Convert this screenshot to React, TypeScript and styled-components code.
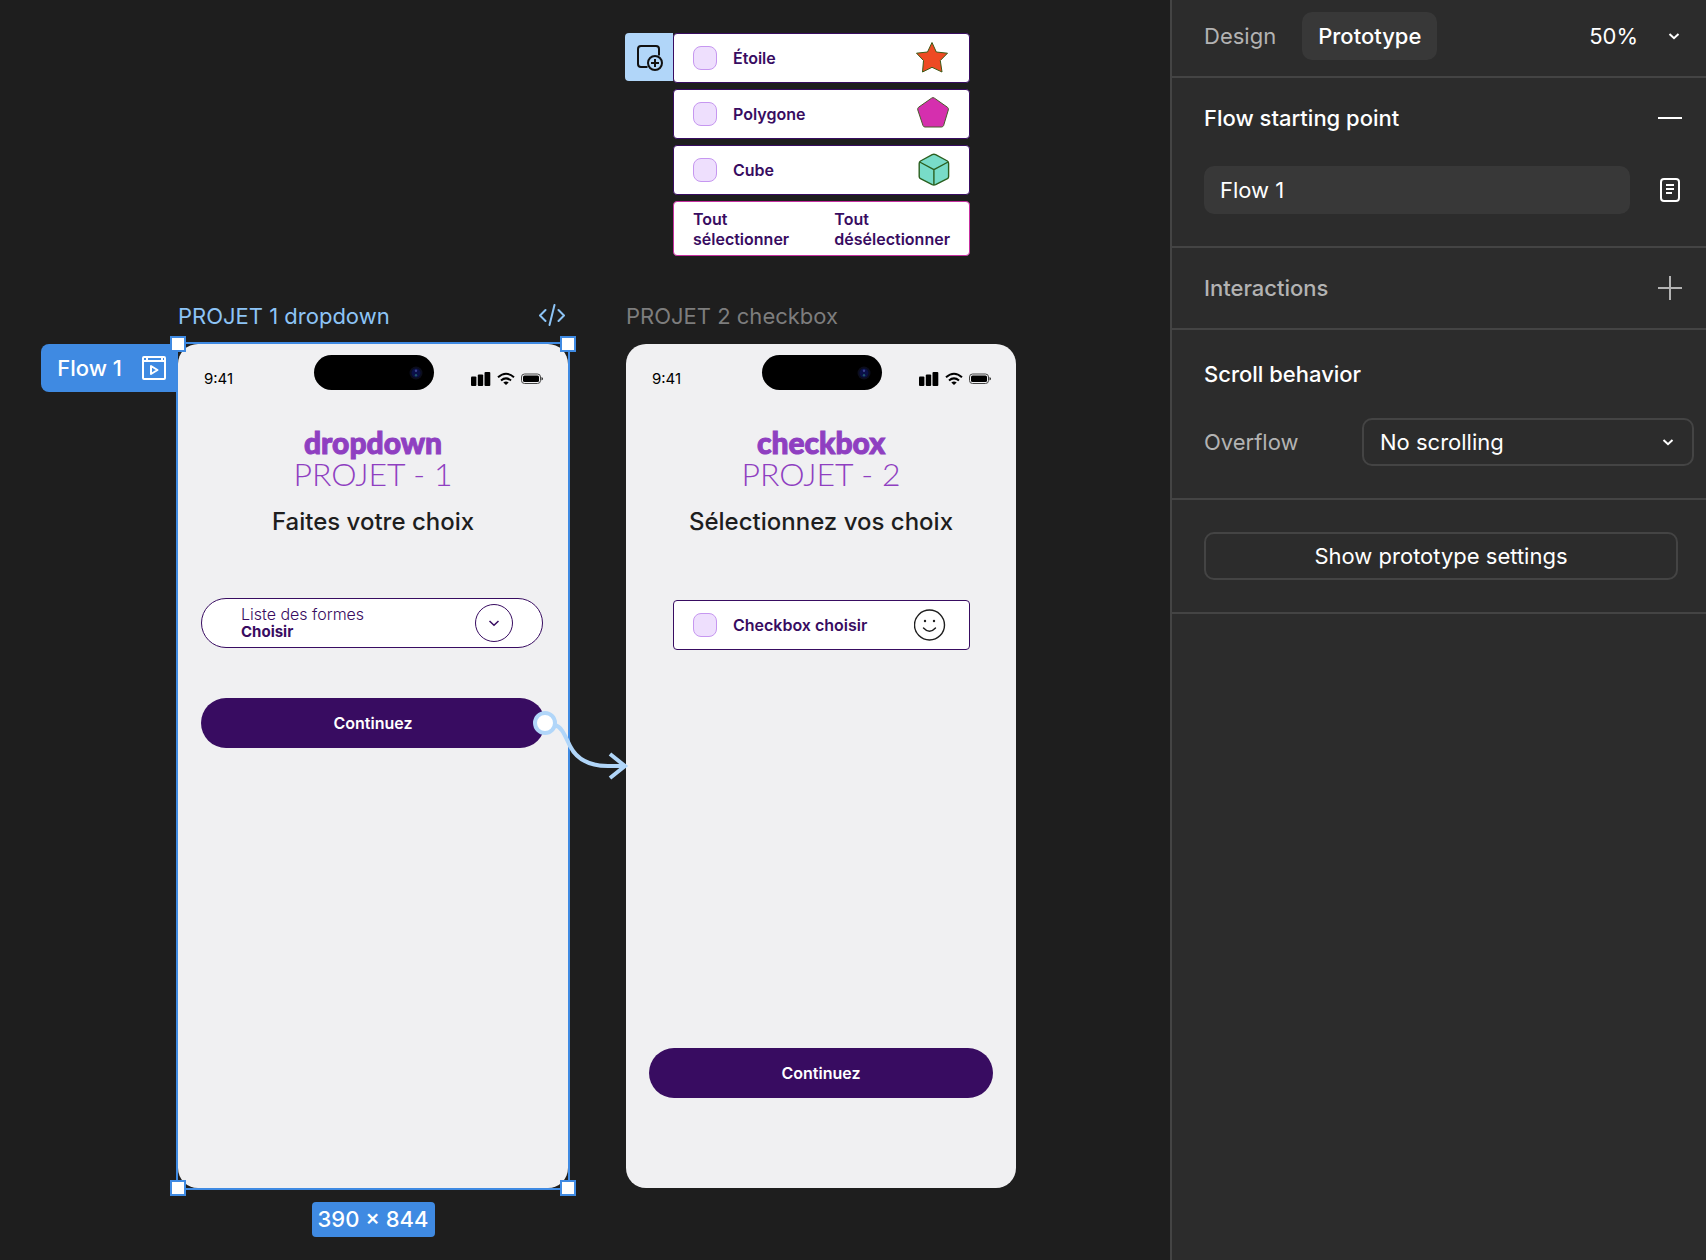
import React from "react";
import styled, { createGlobalStyle } from "styled-components";

const color = {
  canvas: "#1e1e1e",
  panel: "#2c2c2c",
  line: "#444444",
  field: "#383838",
  muted: "#b3b3b3",
  blue: "#3f8ae2",
  paleBlue: "#b1d6f9",
  plum: "#380c61",
  violet: "#8f3fc1",
  paper: "#f0f0f2",
};

const GlobalStyle = createGlobalStyle`
  *, *::before, *::after { box-sizing: border-box; }
  body {
    margin: 0;
    background: ${color.canvas};
    font-family: Inter, "Liberation Sans", sans-serif;
    -webkit-font-smoothing: antialiased;
  }
  button, input, select { font: inherit; color: inherit; margin: 0; }
  h1, h2, p { margin: 0; }
  svg { display: block; flex: none; }
`;

const Layout = styled.div`
  display: flex;
  min-height: 100vh;
`;

/* ---------- Canvas ---------- */

const Canvas = styled.main`
  position: relative;
  flex: 1;
  min-width: 0;
  overflow: hidden;
  background: ${color.canvas};
`;

const Node = styled.section<{ $x: number; $y: number }>`
  position: absolute;
  left: ${(p) => p.$x}px;
  top: ${(p) => p.$y}px;
`;

const ComponentSet = styled.div`
  display: flex;
  align-items: flex-start;
`;

const AddVariant = styled.button`
  display: grid;
  place-items: center;
  width: 48px;
  height: 48px;
  padding: 0;
  border: 0;
  border-radius: 4px 0 0 4px;
  background: ${color.paleBlue};
  color: #111;
`;

const Variants = styled.div`
  display: grid;
  gap: 6px;
  width: 297px;
`;

const CheckRow = styled.label`
  display: flex;
  align-items: center;
  gap: 16px;
  height: 50px;
  padding: 0 19px;
  border: 1px solid ${color.plum};
  border-radius: 4px;
  background: #fff;
  color: ${color.plum};
  font-size: 16px;
  font-weight: 600;
`;

const CheckText = styled.span`
  flex: 1;
`;

const Check = styled.input`
  appearance: none;
  width: 24px;
  height: 24px;
  border: 1px solid #c697f0;
  border-radius: 8px;
  background: #eedffd;

  &:checked {
    background: #c697f0;
  }
`;

const BulkRow = styled.div`
  display: flex;
  justify-content: space-between;
  padding: 7px 19px 6px;
  border: 1px solid #c52f9f;
  border-radius: 4px;
  background: #fff;
`;

const BulkButton = styled.button`
  padding: 0;
  border: 0;
  background: none;
  color: ${color.plum};
  font-size: 16px;
  font-weight: 600;
  line-height: 20px;
  text-align: left;
`;

const FrameLabel = styled.header<{ $active?: boolean }>`
  display: flex;
  align-items: center;
  justify-content: space-between;
  height: 32px;
  margin-bottom: 12px;
  padding-right: 2px;
  color: ${(p) => (p.$active ? "#8dc4f6" : "#7d7d7d")};
  font-size: 22px;
  line-height: 32px;
`;

const FrameBody = styled.div`
  position: relative;
`;

const Phone = styled.article`
  display: flex;
  flex-direction: column;
  width: 390px;
  height: 844px;
  padding: 0 23px 90px;
  border-radius: 20px;
  background: ${color.paper};
`;

const StatusBar = styled.div`
  display: grid;
  grid-template-columns: 1fr auto 1fr;
  align-items: center;
  height: 47px;
  margin: 11px 2px 0 3px;
  color: #000;
  font-size: 15px;
`;

const Island = styled.div`
  display: flex;
  align-items: center;
  justify-content: flex-end;
  align-self: start;
  width: 120px;
  height: 35px;
  padding-right: 11px;
  border-radius: 18px;
  background: #000;
`;

const StatusIcons = styled.div`
  display: flex;
  align-items: center;
  justify-content: flex-end;
  gap: 6px;
`;

const PhoneTitle = styled.h1`
  display: grid;
  margin: 24px 0 16px;
  color: ${color.violet};
  font-family: Lato, Inter, sans-serif;
  font-size: 32px;
  font-weight: 300;
  line-height: 32px;
  text-align: center;
`;

const TitleName = styled.strong`
  font-size: 30px;
  font-weight: 900;
  -webkit-text-stroke: 1px currentColor;
`;

const PhoneSubtitle = styled.p`
  color: #1e1e1e;
  font-size: 24px;
  font-weight: 500;
  line-height: 32px;
  text-align: center;
`;

const Picker = styled.label`
  display: flex;
  align-items: center;
  justify-content: space-between;
  width: 342px;
  height: 50px;
  margin: 60px 0 50px;
  padding: 0 29px 0 39px;
  border: 1px solid ${color.plum};
  border-radius: 25px;
  background: #fff;
  color: ${color.plum};
`;

const PickerText = styled.span`
  display: grid;
  flex: 1;
  font-size: 16px;
  font-weight: 300;
  line-height: 18px;
`;

const PickerSelect = styled.select`
  appearance: none;
  height: 18px;
  padding: 0;
  border: 0;
  background: none;
  font-size: 15px;
  font-weight: 700;
  line-height: 18px;
`;

const PickerArrow = styled.span`
  display: grid;
  place-items: center;
  width: 38px;
  height: 38px;
  border: 1px solid ${color.plum};
  border-radius: 50%;
`;

const CheckSlot = styled.div`
  width: 297px;
  margin: 62px auto auto 24px;
`;

const Continue = styled.button`
  height: 50px;
  border: 0;
  border-radius: 25px;
  background: ${color.plum};
  color: #fff;
  font-size: 16px;
  font-weight: 600;
`;

/* ---------- Selection overlay ---------- */

const Outline = styled.div`
  position: absolute;
  inset: -2px;
  border: 2px solid ${color.blue};
  pointer-events: none;
`;

const Handle = styled.span<{ $right?: boolean; $bottom?: boolean }>`
  position: absolute;
  ${(p) => (p.$right ? "right" : "left")}: -8px;
  ${(p) => (p.$bottom ? "bottom" : "top")}: -8px;
  width: 16px;
  height: 16px;
  border: 2px solid ${color.blue};
  background: #fff;
`;

const FlowTag = styled.button`
  position: absolute;
  top: 0;
  right: 100%;
  display: flex;
  align-items: center;
  gap: 20px;
  height: 48px;
  padding: 0 12px 0 16px;
  border: 0;
  border-radius: 8px 0 0 8px;
  background: ${color.blue};
  color: #fff;
  font-size: 22px;
  font-weight: 500;
  white-space: nowrap;
`;

const SizeRow = styled.div`
  position: absolute;
  top: 100%;
  left: 0;
  right: 0;
  display: flex;
  justify-content: center;
  padding-top: 14px;
`;

const SizeBadge = styled.span`
  padding: 0 6px;
  border-radius: 4px;
  background: ${color.blue};
  color: #fff;
  font-size: 22px;
  font-weight: 500;
  line-height: 35px;
`;

const Connector = styled.svg`
  position: absolute;
  left: 354px;
  top: 366px;
`;

/* ---------- Side panel ---------- */

const Panel = styled.aside`
  flex: none;
  width: 536px;
  border-left: 2px solid ${color.line};
  background: ${color.panel};
  color: #fff;
  font-size: 22px;
  line-height: 32px;
`;

const PanelHeader = styled.header`
  display: flex;
  align-items: center;
  justify-content: space-between;
  padding: 12px 16px 16px;
  border-bottom: 2px solid ${color.line};
`;

const Tabs = styled.nav`
  display: flex;
  gap: 10px;
`;

const Tab = styled.button<{ $active?: boolean }>`
  height: 48px;
  padding: 0 16px;
  border: 0;
  border-radius: 10px;
  background: ${(p) => (p.$active ? color.field : "none")};
  color: ${(p) => (p.$active ? "#fff" : color.muted)};
  font-weight: ${(p) => (p.$active ? 500 : 400)};
`;

const Zoom = styled.button`
  display: flex;
  align-items: center;
  gap: 30px;
  padding: 0 10px;
  border: 0;
  background: none;
`;

const Section = styled.section<{ $gap?: number; $top?: number; $bottom?: number }>`
  display: grid;
  gap: ${(p) => p.$gap ?? 0}px;
  padding: ${(p) => p.$top ?? 16}px 12px ${(p) => p.$bottom ?? 16}px 32px;
  border-bottom: 2px solid ${color.line};
`;

const Line = styled.div`
  display: flex;
  align-items: center;
  justify-content: space-between;
  height: 48px;
`;

const SectionTitle = styled.h2<{ $muted?: boolean }>`
  color: ${(p) => (p.$muted ? color.muted : "#fff")};
  font-size: 22px;
  font-weight: 500;
`;

const IconButton = styled.button<{ $muted?: boolean }>`
  display: grid;
  place-items: center;
  width: 48px;
  height: 48px;
  padding: 0;
  border: 0;
  background: none;
  color: ${(p) => (p.$muted ? color.muted : "#fff")};
`;

const TextField = styled.input`
  flex: 1;
  min-width: 0;
  height: 48px;
  margin-right: 16px;
  padding: 0 16px;
  border: 0;
  border-radius: 10px;
  background: ${color.field};
`;

const FieldLabel = styled.label`
  color: ${color.muted};
`;

const SelectBox = styled.div`
  position: relative;
  width: 332px;
`;

const Select = styled.select`
  appearance: none;
  width: 100%;
  height: 48px;
  padding: 0 16px;
  border: 2px solid ${color.line};
  border-radius: 10px;
  background: ${color.panel};
`;

const SelectArrow = styled.span`
  position: absolute;
  top: 50%;
  right: 20px;
  transform: translateY(-50%);
  pointer-events: none;
`;

const SettingsButton = styled.button`
  height: 48px;
  margin-right: 16px;
  border: 2px solid ${color.line};
  border-radius: 10px;
  background: none;
`;

/* ---------- Drawings ---------- */

const Chevron = ({ stroke = 2 }: { stroke?: number }) => (
  <svg width="12" height="12" viewBox="0 0 12 12" fill="none" stroke="currentColor" strokeWidth={stroke}>
    <path d="M1.5 4 6 8.2 10.5 4" />
  </svg>
);

const AddIcon = () => (
  <svg width="28" height="28" viewBox="0 0 28 28" fill="none" stroke="currentColor" strokeWidth="2">
    <path d="M12.500 24H6a3 3 0 0 1-3-3V6a3 3 0 0 1 3-3h15a3 3 0 0 1 3 3v6.500" />
    <circle cx="20" cy="20" r="7" />
    <path d="M20 16v8M16 20h8" />
  </svg>
);

const StarIcon = () => (
  <svg width="36" height="36" viewBox="0 0 36 36" fill="#ee4a23" stroke="#3c5a16" strokeLinejoin="round">
    <path d="M18 2.500 22.300 12 33.500 13.200 26.300 20.500 28 32 18 27.300 8.500 32 9.500 20.500 2.500 13.200 13.500 12Z" />
  </svg>
);

const PentagonIcon = () => (
  <svg width="36" height="36" viewBox="0 0 36 36" fill="#d52fae" stroke="#4a5a2a" strokeLinejoin="round">
    <path d="M17.500 2.200Q19 1 20.500 2.200L33.500 11.300Q34.800 12.400 34.300 14L29.600 29.600Q29 31 27.500 31H11Q9.500 31 9 29.600L3.800 14Q3.300 12.400 4.500 11.300Z" />
  </svg>
);

const CubeIcon = () => (
  <svg width="36" height="36" viewBox="0 0 36 36" fill="#78dcc8" stroke="#2b5f1f" strokeWidth="1.400" strokeLinejoin="round">
    <path d="M18.200 2.700Q19.900 1.900 21.600 2.700L33.400 9Q34.600 9.800 34.600 11.400V24.400Q34.600 26 33.400 26.700L21.600 32.700Q19.900 33.500 18.200 32.700L6.500 26.700Q5.200 26 5.200 24.400V11.400Q5.200 9.800 6.500 9Z" />
    <path d="M5.700 10 19.900 17.700 34.100 10M19.900 17.700V33" fill="none" />
  </svg>
);

const SmileyIcon = () => (
  <svg width="36" height="36" viewBox="0 0 36 36" fill="none" stroke="#1e1e1e" strokeWidth="1.400" strokeLinecap="round">
    <circle cx="15.500" cy="18" r="15" />
    <path d="M9.500 21Q15.500 27.500 21.500 21" />
    <g fill="#1e1e1e" stroke="none">
      <circle cx="11" cy="14" r="1.200" />
      <circle cx="20" cy="14" r="1.200" />
    </g>
  </svg>
);

const CodeIcon = () => (
  <svg width="28" height="24" viewBox="0 0 28 24" fill="none" stroke="currentColor" strokeWidth="2" strokeLinecap="round" strokeLinejoin="round">
    <path d="M7.500 6 2 11.500 7.500 17M20.500 6 26 11.500 20.500 17M16.500 1 11.500 21" />
  </svg>
);

const PlayFrameIcon = () => (
  <svg width="24" height="24" viewBox="0 0 24 24" fill="none" stroke="currentColor" strokeWidth="2">
    <rect x="1" y="1" width="22" height="22" rx="1" />
    <path d="M1 5H23M5 1V5M20 1V5" />
    <path d="M9 10V18L15.500 14Z" strokeLinejoin="round" />
  </svg>
);

const NoteIcon = () => (
  <svg width="20" height="24" viewBox="0 0 20 24" fill="none" stroke="currentColor" strokeWidth="2">
    <rect x="1" y="1" width="18" height="22" rx="3" />
    <path d="M6 7H14M6 11H14M6 15H12" />
  </svg>
);

const LineIcon = ({ d }: { d: string }) => (
  <svg width="24" height="24" viewBox="0 0 24 24" fill="none" stroke="currentColor" strokeWidth="2">
    <path d={d} />
  </svg>
);

const CameraDot = () => (
  <svg width="14" height="14" viewBox="0 0 14 14">
    <circle cx="7" cy="7" r="6.500" fill="#0b0d1c" />
    <circle cx="7" cy="7" r="4.500" fill="#0a1048" />
    <circle cx="7" cy="4.800" r="1.200" fill="#3b4290" />
    <circle cx="7" cy="9.200" r="1.200" fill="#1f5468" />
  </svg>
);

const Signal = () => (
  <svg width="20" height="14" viewBox="0 0 20 14" fill="#000">
    <rect x="0" y="4.500" width="5.400" height="9.500" rx="1" />
    <rect x="6.800" y="2.500" width="5.400" height="11.500" rx="1" />
    <rect x="13.500" y="0" width="5.800" height="14" rx="1" />
  </svg>
);

const Wifi = () => (
  <svg width="18" height="14" viewBox="0 0 18 14" fill="none" stroke="#000" strokeWidth="2">
    <path d="M1 5.300Q9-1.800 17 5.300M4 8.600Q9 4.200 14 8.600" />
    <path d="M9 13 6.300 10.500Q9 8.400 11.700 10.500Z" fill="#000" stroke="none" />
  </svg>
);

const Battery = () => (
  <svg width="22" height="12" viewBox="0 0 22 12">
    <rect x="0.500" y="1" width="19" height="9.500" rx="3" fill="none" stroke="#444" />
    <rect x="2" y="2.500" width="16" height="6.500" rx="1.500" fill="#000" />
    <path d="M20.500 4v3.500Q22 7 22 5.700 22 4.500 20.500 4Z" fill="#222" />
  </svg>
);

/* ---------- Composed parts ---------- */

function CheckOption({ label, icon }: { label: string; icon: React.ReactNode }) {
  return (
    <CheckRow>
      <Check type="checkbox" />
      <CheckText>{label}</CheckText>
      {icon}
    </CheckRow>
  );
}

function PhoneHead({ name, project, subtitle }: { name: string; project: string; subtitle: string }) {
  return (
    <>
      <StatusBar>
        <span>9:41</span>
        <Island>
          <CameraDot />
        </Island>
        <StatusIcons>
          <Signal />
          <Wifi />
          <Battery />
        </StatusIcons>
      </StatusBar>
      <PhoneTitle>
        <TitleName>{name}</TitleName>
        <span>{project}</span>
      </PhoneTitle>
      <PhoneSubtitle>{subtitle}</PhoneSubtitle>
    </>
  );
}

export default function App() {
  return (
    <Layout>
      <GlobalStyle />
      <Canvas>
        <Node $x={625} $y={33}>
          <ComponentSet>
            <AddVariant aria-label="Add variant">
              <AddIcon />
            </AddVariant>
            <Variants>
              <CheckOption label="Étoile" icon={<StarIcon />} />
              <CheckOption label="Polygone" icon={<PentagonIcon />} />
              <CheckOption label="Cube" icon={<CubeIcon />} />
              <BulkRow>
                <BulkButton>
                  Tout
                  <br />
                  sélectionner
                </BulkButton>
                <BulkButton>
                  Tout
                  <br />
                  désélectionner
                </BulkButton>
              </BulkRow>
            </Variants>
          </ComponentSet>
        </Node>

        <Node $x={626} $y={300}>
          <FrameLabel>PROJET 2 checkbox</FrameLabel>
          <FrameBody>
            <Phone>
              <PhoneHead name="checkbox" project="PROJET - 2" subtitle="Sélectionnez vos choix" />
              <CheckSlot>
                <CheckOption label="Checkbox choisir" icon={<SmileyIcon />} />
              </CheckSlot>
              <Continue>Continuez</Continue>
            </Phone>
          </FrameBody>
        </Node>

        <Node $x={178} $y={300}>
          <FrameLabel $active>
            PROJET 1 dropdown
            <CodeIcon />
          </FrameLabel>
          <FrameBody>
            <Phone>
              <PhoneHead name="dropdown" project="PROJET - 1" subtitle="Faites votre choix" />
              <Picker>
                <PickerText>
                  Liste des formes
                  <PickerSelect>
                    <option>Choisir</option>
                  </PickerSelect>
                </PickerText>
                <PickerArrow>
                  <Chevron stroke={1.5} />
                </PickerArrow>
              </Picker>
              <Continue>Continuez</Continue>
            </Phone>
            <FlowTag>
              Flow 1
              <PlayFrameIcon />
            </FlowTag>
            <Outline />
            <Handle />
            <Handle $right />
            <Handle $bottom />
            <Handle $right $bottom />
            <Connector width="98" height="72" viewBox="0 0 98 72" fill="none" stroke={color.paleBlue} strokeWidth="4">
              <path d="M23 15C30 17 33 26 38 36C45 50 57 56 76 56H92" />
              <path d="M78 44 93 56 78 68" />
              <circle cx="13" cy="13" r="10" fill="#fff" />
            </Connector>
            <SizeRow>
              <SizeBadge>390 × 844</SizeBadge>
            </SizeRow>
          </FrameBody>
        </Node>
      </Canvas>

      <Panel>
        <PanelHeader>
          <Tabs>
            <Tab>Design</Tab>
            <Tab $active>Prototype</Tab>
          </Tabs>
          <Zoom>
            50%
            <Chevron />
          </Zoom>
        </PanelHeader>

        <Section $gap={24} $bottom={32}>
          <Line>
            <SectionTitle>Flow starting point</SectionTitle>
            <IconButton aria-label="Remove starting point">
              <LineIcon d="M0 12H24" />
            </IconButton>
          </Line>
          <Line>
            <TextField aria-label="Flow name" defaultValue="Flow 1" />
            <IconButton aria-label="Flow description">
              <NoteIcon />
            </IconButton>
          </Line>
        </Section>

        <Section>
          <Line>
            <SectionTitle $muted>Interactions</SectionTitle>
            <IconButton $muted aria-label="Add interaction">
              <LineIcon d="M0 12H24M12 0V24" />
            </IconButton>
          </Line>
        </Section>

        <Section $gap={20} $top={20} $bottom={32}>
          <Line>
            <SectionTitle>Scroll behavior</SectionTitle>
          </Line>
          <Line>
            <FieldLabel htmlFor="overflow">Overflow</FieldLabel>
            <SelectBox>
              <Select id="overflow">
                <option>No scrolling</option>
              </Select>
              <SelectArrow>
                <Chevron />
              </SelectArrow>
            </SelectBox>
          </Line>
        </Section>

        <Section $top={32} $bottom={32}>
          <SettingsButton>Show prototype settings</SettingsButton>
        </Section>
      </Panel>
    </Layout>
  );
}
